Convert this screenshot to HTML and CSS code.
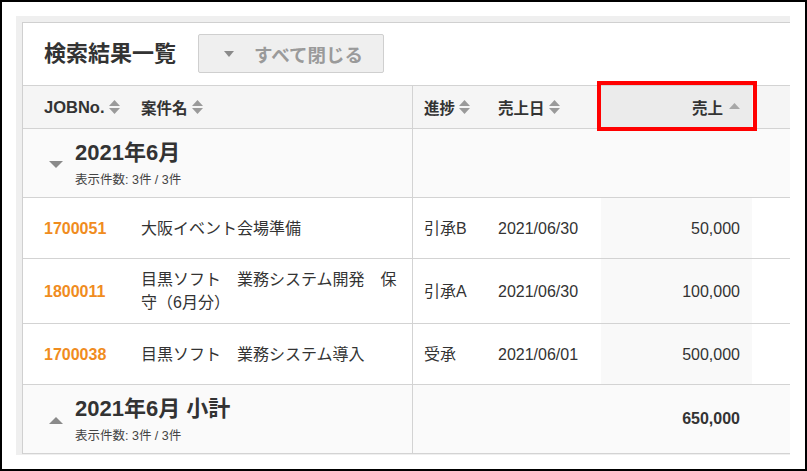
FILE: index.html
```html
<!DOCTYPE html>
<html lang="ja">
<head>
<meta charset="utf-8">
<title>検索結果一覧</title>
<link rel="stylesheet" href="styles.css">
</head>
<body>
<div class="frame">
  <div class="wrap">
    <div class="panel">
      <div class="titlebar">
        <h1 class="title">検索結果一覧</h1>
        <button class="collapse-btn" type="button">
          <svg class="btn-tri" width="10" height="6" viewBox="0 0 10 6"><polygon points="0,0 10,0 5,6"/></svg>
          <span>すべて閉じる</span>
        </button>
      </div>

      <div class="row head">
        <div class="cell c1"><span class="latin">JOBNo.</span><svg class="sort" width="11" height="14" viewBox="0 0 11 14"><polygon points="0,6 5.5,0 11,6"/><polygon points="0,8 11,8 5.5,14"/></svg></div>
        <div class="cell c2"><span>案件名</span><svg class="sort" width="11" height="14" viewBox="0 0 11 14"><polygon points="0,6 5.5,0 11,6"/><polygon points="0,8 11,8 5.5,14"/></svg></div>
        <div class="cell c3"><span>進捗</span><svg class="sort" width="11" height="14" viewBox="0 0 11 14"><polygon points="0,6 5.5,0 11,6"/><polygon points="0,8 11,8 5.5,14"/></svg></div>
        <div class="cell c4"><span>売上日</span><svg class="sort" width="11" height="14" viewBox="0 0 11 14"><polygon points="0,6 5.5,0 11,6"/><polygon points="0,8 11,8 5.5,14"/></svg></div>
        <div class="cell c5 sorted"><span>売上</span><svg class="asc" width="11" height="6" viewBox="0 0 11 6"><polygon points="0,6 5.5,0 11,6"/></svg><div class="highlight"></div></div>
        <div class="cell c6"></div>
      </div>

      <div class="row group">
        <div class="cell c12">
          <svg class="gtri" width="14" height="7" viewBox="0 0 14 7"><polygon points="0,0 14,0 7,7"/></svg>
          <div class="gtext">
            <div class="gtitle">2021年6月</div>
            <div class="gsub">表示件数: 3件 / 3件</div>
          </div>
        </div>
        <div class="cell c3"></div>
        <div class="cell c4"></div>
        <div class="cell c5"></div>
        <div class="cell c6"></div>
      </div>

      <div class="row data">
        <div class="cell c1 job">1700051</div>
        <div class="cell c2">大阪イベント会場準備</div>
        <div class="cell c3">引承B</div>
        <div class="cell c4">2021/06/30</div>
        <div class="cell c5">50,000</div>
        <div class="cell c6"></div>
      </div>

      <div class="row data">
        <div class="cell c1 job">1800011</div>
        <div class="cell c2">目黒ソフト　業務システム開発　保守（6月分）</div>
        <div class="cell c3">引承A</div>
        <div class="cell c4">2021/06/30</div>
        <div class="cell c5">100,000</div>
        <div class="cell c6"></div>
      </div>

      <div class="row data">
        <div class="cell c1 job">1700038</div>
        <div class="cell c2">目黒ソフト　業務システム導入</div>
        <div class="cell c3">受承</div>
        <div class="cell c4">2021/06/01</div>
        <div class="cell c5">500,000</div>
        <div class="cell c6"></div>
      </div>

      <div class="row group sum">
        <div class="cell c12">
          <svg class="gtri" width="14" height="7" viewBox="0 0 14 7"><polygon points="0,7 7,0 14,7"/></svg>
          <div class="gtext">
            <div class="gtitle">2021年6月 小計</div>
            <div class="gsub">表示件数: 3件 / 3件</div>
          </div>
        </div>
        <div class="cell c3"></div>
        <div class="cell c4"></div>
        <div class="cell c5 total">650,000</div>
        <div class="cell c6"></div>
      </div>
    </div>
  </div>
</div>
</body>
</html>
```

FILE: styles.css
```css
* {
  box-sizing: border-box;
}

html, body {
  margin: 0;
  padding: 0;
  background: #fff;
}

body {
  font-family: "Liberation Sans", "Noto Sans CJK JP", sans-serif;
  color: #333;
}

.frame {
  width: 807px;
  height: 471px;
  border: 2px solid #000;
  padding: 14px 0 0 14px;
  overflow: hidden;
}

.wrap {
  width: 774px;
  height: 439px;
  background: #efefef;
  padding: 6px 0 0 6px;
  overflow: hidden;
}

.panel {
  width: 900px;
  background: #fff;
  border-top: 1px solid #d0d0d0;
  border-left: 1px solid #d0d0d0;
}

.titlebar {
  display: flex;
  align-items: center;
  gap: 22px;
  padding: 11px 0 12px 21px;
}

.title {
  margin: 0;
  font-size: 22px;
  font-weight: bold;
  line-height: 30px;
  color: #333;
}

.collapse-btn {
  display: flex;
  align-items: center;
  gap: 20px;
  height: 39px;
  padding: 0 20px 0 25px;
  background: #efefef;
  border: 1px solid #cfcfcf;
  border-radius: 2px;
  font-family: "Liberation Sans", "Noto Sans CJK JP", sans-serif;
  font-size: 18.5px;
  font-weight: bold;
  color: #9a9a9a;
}

.btn-tri {
  fill: #8a8a8a;
}

.row {
  display: grid;
  grid-template-columns: 108px 282px 75px 113px 151px 1fr;
  border-top: 1px solid #d3d3d3;
}

.cell {
  display: flex;
  align-items: center;
  padding: 0 10px;
}

.c1 {
  padding-left: 21px;
}

.c2,
.c12 {
  border-right: 1px solid #d3d3d3;
}

.c3 {
  padding-left: 11px;
}

.c5 {
  justify-content: flex-end;
  padding-right: 12px;
}

/* header */
.head .cell {
  height: 42px;
  background: #f5f5f5;
  font-size: 15.5px;
  font-weight: bold;
  gap: 4px;
}

.head .latin {
  font-size: 16.5px;
}

.head .sort {
  fill: #9a9a9a;
}

.head .c5.sorted {
  position: relative;
  background: #ebebeb;
  gap: 6px;
}

.head .asc {
  fill: #a8a8a8;
  margin-top: -2px;
}

.highlight {
  position: absolute;
  left: -4px;
  right: -5px;
  top: -5px;
  bottom: -3px;
  border: 4px solid #ff0000;
  pointer-events: none;
}

/* group rows */
.group .cell {
  min-height: 68px;
  background: #fafafa;
}

.c12 {
  grid-column: 1 / 3;
  padding: 11px 10px 8px 26px;
  gap: 12px;
}

.gtri {
  fill: #8a8a8a;
  flex: none;
}

.gtext {
  display: flex;
  flex-direction: column;
}

.gtitle {
  font-size: 22px;
  font-weight: bold;
  line-height: 26px;
}

.gsub {
  margin-top: 5px;
  font-size: 12.5px;
  line-height: 18px;
  color: #444;
}

.total {
  font-size: 16px;
  font-weight: bold;
}

/* data rows */
.data .cell {
  min-height: 60px;
  padding-top: 9px;
  padding-bottom: 9px;
  font-size: 16px;
  line-height: 23px;
}

.data .c5 {
  background: #f9f9f9;
}

.job {
  color: #f08c1e;
  font-weight: bold;
}

.sum {
  border-bottom: 1px solid #d3d3d3;
}
```
